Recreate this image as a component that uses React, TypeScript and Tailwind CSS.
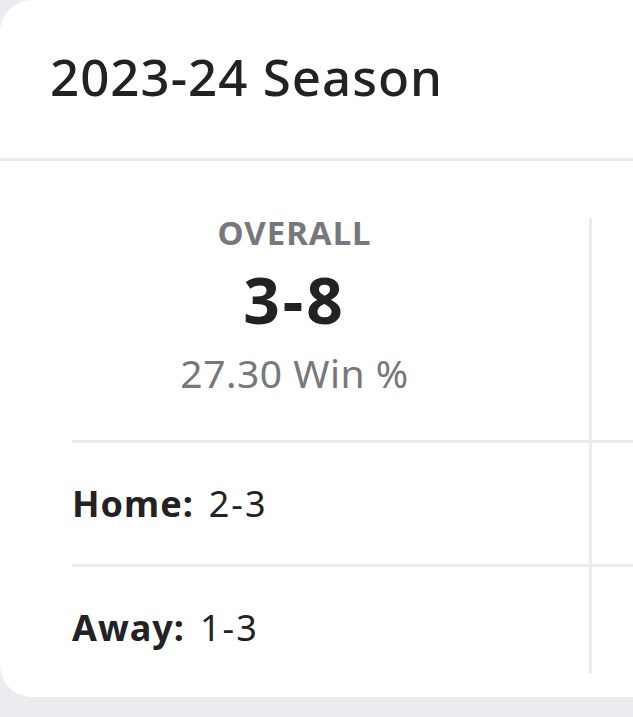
import React from 'react';

const rows = [
  { label: 'Home:', value: '2-3' },
  { label: 'Away:', value: '1-3' },
];

const Divider: React.FC<{ className?: string }> = ({ className }) => (
  <div className={`h-[3px] bg-[#ececee] ${className ?? ''}`} />
);

export default function App() {
  return (
    <div className="min-h-screen w-[633px] overflow-hidden bg-[#ebecef] font-['Noto_Sans',sans-serif] text-[#222]">
      <div className="w-[700px] h-[697px] bg-white rounded-l-[32px] flex flex-col">
        {/* Header */}
        <div className="h-[158px] flex items-center pl-[50px] pb-[6px]">
          <h2 className="text-[51px] leading-none font-medium tracking-[1px]">2023-24 Season</h2>
        </div>
        <Divider />

        {/* Record table */}
        <div className="flex pt-[57px]">
          <div className="w-[589px] flex flex-col">
            <div className="h-[222px] flex flex-col items-center">
              <p className="text-[33px] leading-none font-bold text-[#77787b] tracking-[1px] -mt-[2px]">OVERALL</p>
              <p className="text-[64px] leading-none font-bold tracking-[3px] mt-[19px]">3-8</p>
              <p className="text-[39px] leading-none text-[#77787b] tracking-[0.5px] mt-[21px]">27.30 Win %</p>
            </div>
            {rows.map((row) => (
              <div key={row.label} className="pl-[72px]">
                <Divider />
                <div className="h-[121px] flex items-center gap-[15px] text-[36px] leading-none">
                  <span className="font-bold tracking-[1px]">{row.label}</span>
                  <span className="tracking-[2px]">{row.value}</span>
                </div>
              </div>
            ))}
          </div>
          <div className="w-[3px] h-[455px] bg-[#ececee]" />
          <div className="flex-1 flex flex-col">
            <div className="h-[222px]" />
            <Divider />
            <div className="h-[121px]" />
            <Divider />
          </div>
        </div>
      </div>
    </div>
  );
}
